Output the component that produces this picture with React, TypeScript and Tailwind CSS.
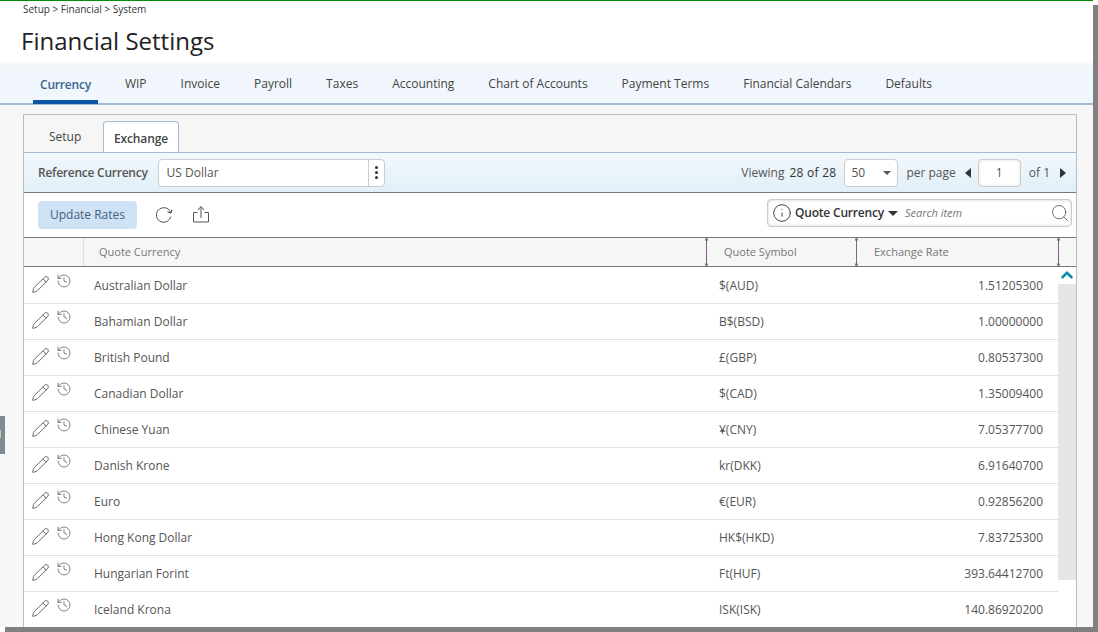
import { ChevronUp, History, Info, Pencil, Search } from "lucide-react";

const navItems = ["Currency", "WIP", "Invoice", "Payroll", "Taxes", "Accounting", "Chart of Accounts", "Payment Terms", "Financial Calendars", "Defaults"];

const rates = [
  { name: "Australian Dollar", symbol: "$(AUD)", rate: "1.51205300" },
  { name: "Bahamian Dollar", symbol: "B$(BSD)", rate: "1.00000000" },
  { name: "British Pound", symbol: "£(GBP)", rate: "0.80537300" },
  { name: "Canadian Dollar", symbol: "$(CAD)", rate: "1.35009400" },
  { name: "Chinese Yuan", symbol: "¥(CNY)", rate: "7.05377700" },
  { name: "Danish Krone", symbol: "kr(DKK)", rate: "6.91640700" },
  { name: "Euro", symbol: "€(EUR)", rate: "0.92856200" },
  { name: "Hong Kong Dollar", symbol: "HK$(HKD)", rate: "7.83725300" },
  { name: "Hungarian Forint", symbol: "Ft(HUF)", rate: "393.64412700" },
  { name: "Iceland Krona", symbol: "ISK(ISK)", rate: "140.86920200" },
];

function ColumnHandle() {
  return (
    <div className="absolute right-0 top-0 bottom-0 w-px bg-[#8a5d8f]">
      <div className="absolute -left-px top-0 h-[3px] w-[3px] rounded-full bg-[#777]" />
      <div className="absolute -left-px bottom-0 h-[3px] w-[3px] rounded-full bg-[#777]" />
    </div>
  );
}

export default function App() {
  return (
    <div className="h-[632px] w-[1098px] overflow-hidden bg-white">
      <div className="relative flex h-[627px] w-[1093px] flex-col overflow-hidden border-t border-[#078c07] bg-[#f7f7f7] font-['Open_Sans',sans-serif] text-xs text-[#555] shadow-[5px_5px_0_#808080]">
        <div className="h-[64px] shrink-0 border-b-[3px] border-[#fafafa] bg-white pl-[21px]">
          <div className="pl-[2px] pt-[2px] text-[10px] leading-[13px] text-[#333]">Setup &gt; Financial &gt; System</div>
          <h1 className="mt-[8px] text-2xl leading-[33px] text-[#222]">Financial Settings</h1>
        </div>

        <nav className="flex h-[40px] shrink-0 items-stretch gap-[20px] border-b-2 border-[#a5bad6] bg-[#f0f6fb] pl-[33px]">
          {navItems.map((item, i) => (
            <div
              key={item}
              className={
                i === 0
                  ? "-mb-[1px] flex items-center border-b-4 border-[#0b57a4] px-[7px] pt-[4px] font-semibold tracking-[-0.2px] text-[#3a6491]"
                  : "flex items-center px-[7px] pb-[1px] text-[#444]"
              }
            >
              {item}
            </div>
          ))}
        </nav>

        <div className="ml-[23px] mt-[9px] flex w-[1054px] flex-1 flex-col overflow-hidden border-x border-t border-[#bbb] bg-[#f6f6f6]">
          <div className="flex h-[37px] shrink-0 items-end pl-[25px]">
            <div className="mb-[7px] w-[32px] text-center leading-[17px] text-[#444]">Setup</div>
            <div className="-mb-px ml-[22px] flex h-[32px] w-[76px] items-center justify-center rounded-t-sm border border-b-0 border-[#a5bad6] bg-white pt-[2px] font-semibold tracking-[-0.1px] text-[#444]">
              Exchange
            </div>
          </div>

          <div className="flex h-[41px] shrink-0 items-center border-y border-t-[#a5bad6] border-b-[#777] bg-gradient-to-b from-[#f2f8fc] to-[#e1eff8] pl-[14px] pr-[10px]">
            <span className="font-semibold tracking-[-0.25px] text-[#555]">Reference Currency</span>
            <div className="ml-[10px] flex h-[28px] w-[227px] items-center rounded-sm border border-[#ccc] bg-white">
              <span className="flex-1 pl-[8px]">US Dollar</span>
              <div className="flex h-full w-[16px] flex-col items-center justify-center gap-[2px] border-l border-[#ccc]">
                <i className="h-[3px] w-[3px] rounded-full bg-[#333]" />
                <i className="h-[3px] w-[3px] rounded-full bg-[#333]" />
                <i className="h-[3px] w-[3px] rounded-full bg-[#333]" />
              </div>
            </div>
            <span className="ml-auto">Viewing</span>
            <span className="ml-[5px] tracking-[0.25px] text-[#333]">28 of 28</span>
            <div className="ml-[8px] flex h-[28px] w-[54px] items-center justify-between rounded-sm border border-[#ccc] bg-white pl-[6px] pr-[6px]">
              <span>50</span>
              <span className="h-0 w-0 border-x-[4px] border-t-[4px] border-x-transparent border-t-[#555]" />
            </div>
            <span className="ml-[8px]">per page</span>
            <span className="ml-[9px] h-0 w-0 border-y-[5px] border-r-[6px] border-y-transparent border-r-[#333]" />
            <div className="ml-[7px] flex h-[28px] w-[43px] items-center justify-center rounded-sm border border-[#ccc] bg-white shadow-[inset_0_0_3px_#ddd]">1</div>
            <span className="ml-[8px]">of 1</span>
            <span className="ml-[10px] h-0 w-0 border-y-[5px] border-l-[6px] border-y-transparent border-l-[#333]" />
          </div>

          <div className="flex h-[45px] shrink-0 items-center border-b border-[#777] bg-white pl-[14px] pr-[4px]">
            <button className="h-[28px] w-[99px] rounded-sm bg-[#cfe2f5] text-[#44617f]">Update Rates</button>
            <svg className="ml-[17px]" width="20" height="20" viewBox="0 0 20 20" fill="none" stroke="#555" strokeWidth="1">
              <path d="M16.8 11.5A7.3 7.3 0 1 1 11 2.8c2.6.3 4.500 1.900 5.600 4.600" />
              <path d="M13.500 6.800l3.400 1.300 1-3.400" stroke="#333" />
            </svg>
            <svg className="ml-[18px]" width="18" height="20" viewBox="0 0 18 20" fill="none" stroke="#555" strokeWidth="1">
              <path d="M5.500 7.500H1.500v9.500h15V7.500h-4" />
              <path d="M9 13V2M6 5l3-3.500 3 3.500" />
            </svg>
            <div className="-mt-[4px] ml-auto flex h-[28px] w-[305px] items-center rounded-sm border border-[#ccc] bg-white shadow-[inset_0_0_3px_#ccc]">
              <Info className="ml-[4px] text-[#333]" size={20} strokeWidth={1.1} />
              <span className="ml-[3px] font-semibold tracking-[-0.2px] text-[#333]">Quote Currency</span>
              <span className="ml-[4px] h-0 w-0 border-x-[5px] border-t-[5px] border-x-transparent border-t-[#333]" />
              <span className="ml-[7px] flex-1 text-[11px] italic text-[#777]">Search item</span>
              <Search className="mr-[1px] text-[#555]" size={20} strokeWidth={1} />
            </div>
          </div>

          <div className="flex h-[29px] shrink-0 items-stretch border-b border-[#777] text-[11px] text-[#777]">
            <div className="w-[60px] border-r border-[#ddd]" />
            <div className="relative flex w-[623px] items-center pl-[15px]">Quote Currency<ColumnHandle /></div>
            <div className="relative flex w-[150px] items-center pl-[17px]">Quote Symbol<ColumnHandle /></div>
            <div className="relative flex w-[202px] items-center pl-[17px]">Exchange Rate<ColumnHandle /></div>
          </div>

          <div className="flex min-h-0 flex-1 overflow-hidden bg-white">
            <div className="w-[1035px] pt-px">
              {rates.map((r) => (
                <div key={r.name} className="flex h-[36px] items-center border-b border-[#e2e2e2]">
                  <div className="flex w-[70px] shrink-0 items-start pb-[3px] pl-[7px] text-[#555]">
                    <Pencil size={19} strokeWidth={1.1} />
                    <History className="ml-[6px] -mt-[2px]" size={16} strokeWidth={1.1} />
                  </div>
                  <div className="w-[625px] shrink-0">{r.name}</div>
                  <div className="flex-1">{r.symbol}</div>
                  <div className="pr-[15px] text-right">{r.rate}</div>
                </div>
              ))}
            </div>
            <div className="flex w-[18px] flex-col items-center">
              <ChevronUp className="-mt-[1px] text-[#0e8ca8]" size={18} strokeWidth={3.5} />
              <div className="h-[296px] w-full bg-[#e6e6e6]" />
            </div>
          </div>
        </div>

        <div className="absolute left-0 top-[415px] h-[38px] w-[5px] bg-[#7d8a96]">
          <div className="mt-[14px] h-[8px] w-[1px] bg-[#d8c8a0]" />
        </div>
      </div>
    </div>
  );
}
